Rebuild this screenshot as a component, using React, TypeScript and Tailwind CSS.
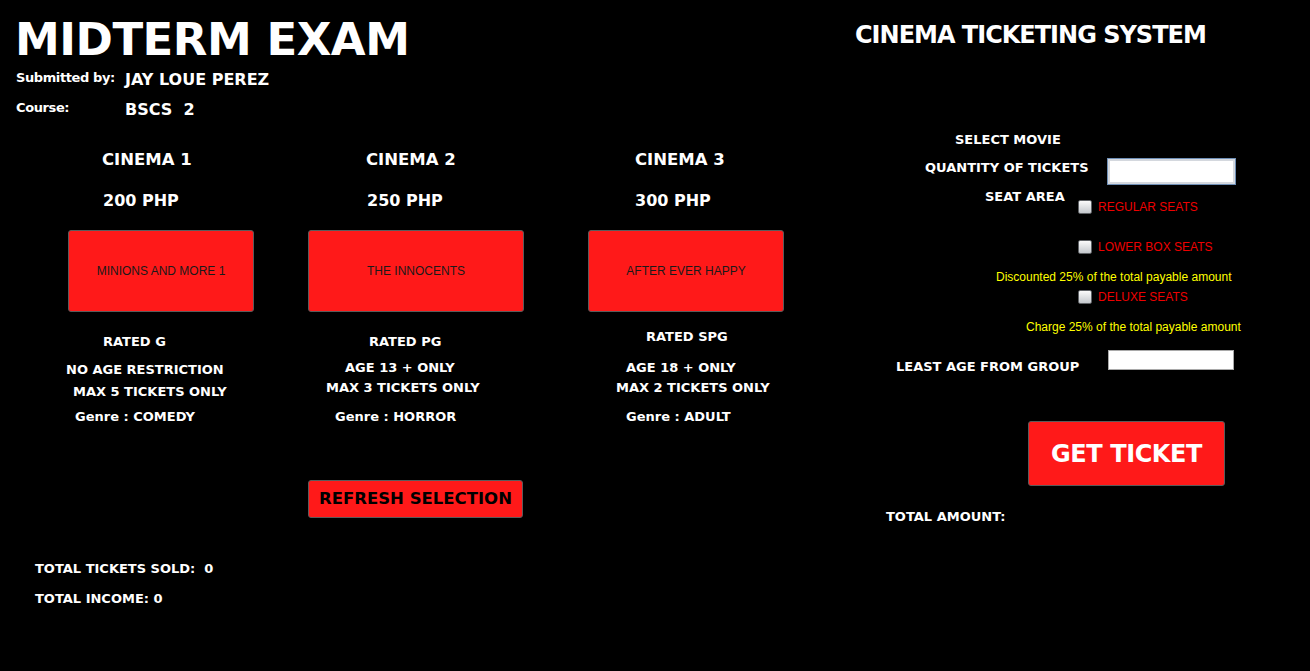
import React from 'react';

const bold = "font-['DejaVu_Sans',sans-serif] font-bold text-white";
const arial = "font-['Liberation_Sans',Arial,sans-serif]";

const MovieButton: React.FC<{ label: string; width: string }> = ({ label, width }) => (
  <button
    className={`ml-[8px] mt-[19px] h-[82px] ${width} rounded-[3px] border border-[#5b5b5b] bg-[#ff1919] text-[12px] text-[#1a1a1a] ${arial}`}
  >
    {label}
  </button>
);

const Checkbox: React.FC<{ label: string }> = ({ label }) => (
  <div className="flex h-[15px] items-start">
    <span className="block h-[14px] w-[14px] rounded-[2px] border border-[#5f6266] bg-linear-to-b from-[#fbfbfb] to-[#c4c8cd]" />
    <span className={`ml-[6px] h-[14px] text-[12px] leading-[14px] text-[#ee0000] ${arial}`}>{label}</span>
  </div>
);

export default function App() {
  return (
    <div className="flex h-[671px] w-full overflow-hidden bg-black">
      {/* left side */}
      <div className="w-[840px] shrink-0">
        <h1 className={`${bold} ml-[15px] mt-[17px] h-[45px] text-[45px] leading-[45px] tracking-[-0.5px]`}>
          MIDTERM EXAM
        </h1>

        <div className="ml-[16px] mt-[8px] flex h-[20px] items-start">
          <span className={`${bold} w-[109px] text-[13px] leading-[16px] tracking-[-0.4px]`}>Submitted by:</span>
          <span className={`${bold} text-[16px] leading-[20px]`}>JAY LOUE PEREZ</span>
        </div>
        <div className="ml-[16px] mt-[10px] flex h-[20px] items-start">
          <span className={`${bold} w-[109px] text-[13px] leading-[16px] tracking-[-0.4px]`}>Course:</span>
          <span className={`${bold} whitespace-pre text-[16px] leading-[20px]`}>BSCS  2</span>
        </div>

        {/* cinemas */}
        <div className="ml-[60px] flex">
          <div className="w-[240px]">
            <p className={`${bold} ml-[42px] mt-[30px] h-[20px] text-[16.5px] leading-[20px]`}>CINEMA 1</p>
            <p className={`${bold} ml-[43px] mt-[21px] h-[20px] text-[16px] leading-[20px]`}>200 PHP</p>
            <MovieButton label="MINIONS AND MORE 1" width="w-[186px]" />
            <p className={`${bold} ml-[43px] mt-[22px] h-[16px] text-[13px] leading-[16px]`}>RATED G</p>
            <p className={`${bold} ml-[6px] mt-[12px] h-[16px] text-[13px] leading-[16px]`}>NO AGE RESTRICTION</p>
            <p className={`${bold} ml-[13px] mt-[6px] h-[16px] text-[13px] leading-[16px]`}>MAX 5 TICKETS ONLY</p>
            <p className={`${bold} ml-[15px] mt-[9px] h-[16px] text-[13px] leading-[16px]`}>Genre : COMEDY</p>
          </div>
          <div className="w-[280px]">
            <p className={`${bold} ml-[66px] mt-[30px] h-[20px] text-[16.5px] leading-[20px]`}>CINEMA 2</p>
            <p className={`${bold} ml-[67px] mt-[21px] h-[20px] text-[16px] leading-[20px]`}>250 PHP</p>
            <MovieButton label="THE INNOCENTS" width="w-[216px]" />
            <p className={`${bold} ml-[69px] mt-[22px] h-[16px] text-[13px] leading-[16px]`}>RATED PG</p>
            <p className={`${bold} ml-[45px] mt-[10px] h-[16px] text-[13px] leading-[16px]`}>AGE 13 + ONLY</p>
            <p className={`${bold} ml-[26px] mt-[4px] h-[16px] text-[13px] leading-[16px]`}>MAX 3 TICKETS ONLY</p>
            <p className={`${bold} ml-[35px] mt-[13px] h-[16px] text-[13px] leading-[16px]`}>Genre : HORROR</p>
          </div>
          <div className="w-[260px]">
            <p className={`${bold} ml-[55px] mt-[30px] h-[20px] text-[16.5px] leading-[20px]`}>CINEMA 3</p>
            <p className={`${bold} ml-[55px] mt-[21px] h-[20px] text-[16px] leading-[20px]`}>300 PHP</p>
            <MovieButton label="AFTER EVER HAPPY" width="w-[196px]" />
            <p className={`${bold} ml-[66px] mt-[17px] h-[16px] text-[13px] leading-[16px]`}>RATED SPG</p>
            <p className={`${bold} ml-[46px] mt-[15px] h-[16px] text-[13px] leading-[16px]`}>AGE 18 + ONLY</p>
            <p className={`${bold} ml-[36px] mt-[4px] h-[16px] text-[13px] leading-[16px]`}>MAX 2 TICKETS ONLY</p>
            <p className={`${bold} ml-[46px] mt-[13px] h-[16px] text-[13px] leading-[16px]`}>Genre : ADULT</p>
          </div>
        </div>

        <button
          className="ml-[308px] mt-[55px] h-[38px] w-[215px] rounded-[3px] border border-[#5b5b5b] bg-[#ff1919] font-['DejaVu_Sans',sans-serif] text-[16.5px] font-bold text-black"
        >
          REFRESH SELECTION
        </button>

        <p className={`${bold} ml-[35px] mt-[43px] h-[16px] whitespace-pre text-[13px] leading-[16px]`}>TOTAL TICKETS SOLD:  0</p>
        <p className={`${bold} ml-[35px] mt-[14px] h-[16px] text-[13px] leading-[16px]`}>TOTAL INCOME: 0</p>
      </div>

      {/* right side */}
      <div className="flex-1">
        <h2 className={`${bold} ml-[15px] mt-[21px] h-[28px] text-[24px] leading-[28px] tracking-[-1px]`}>
          CINEMA TICKETING SYSTEM
        </h2>

        <p className={`${bold} ml-[115px] mt-[83px] h-[16px] text-[13px] leading-[16px]`}>SELECT MOVIE</p>

        <div className="mt-[10px] flex items-start">
          <span className={`${bold} mt-[2px] w-[267px] pl-[85px] text-[13px] leading-[16px]`}>QUANTITY OF TICKETS</span>
          <div className="h-[27px] w-[129px] border border-[#6f8fb6] bg-white shadow-[inset_0_0_0_2px_#d4d8de]" />
        </div>

        <div className="mt-[4px] flex items-start">
          <span className={`${bold} w-[238px] pl-[145px] text-[13px] leading-[16px]`}>SEAT AREA</span>
          <div className="mt-[11px]">
            <Checkbox label="REGULAR SEATS" />
          </div>
        </div>

        <div className="ml-[238px] mt-[25px]">
          <Checkbox label="LOWER BOX SEATS" />
        </div>

        <p className={`ml-[156px] mt-[15px] h-[14px] text-[12px] leading-[14px] text-[#ffff00] ${arial}`}>
          Discounted 25% of the total payable amount
        </p>

        <div className="ml-[238px] mt-[6px]">
          <Checkbox label="DELUXE SEATS" />
        </div>

        <p className={`ml-[186px] mt-[15px] h-[14px] text-[12px] leading-[14px] text-[#ffff00] ${arial}`}>
          Charge 25% of the total payable amount
        </p>

        <div className="mt-[16px] flex items-start">
          <span className={`${bold} mt-[9px] w-[268px] pl-[56px] text-[13px] leading-[16px]`}>LEAST AGE FROM GROUP</span>
          <div className="h-[20px] w-[126px] border border-[#a9a9a9] bg-white" />
        </div>

        <button
          className="ml-[188px] mt-[46px] h-[65px] w-[197px] rounded-[3px] border border-[#5b5b5b] bg-[#ff1919] font-['DejaVu_Sans',sans-serif] text-[24px] font-bold tracking-[-0.4px] text-white"
        >
          GET TICKET
        </button>

        <p className={`${bold} ml-[46px] mt-[23px] h-[16px] text-[13px] leading-[16px]`}>TOTAL AMOUNT:</p>
      </div>
    </div>
  );
}
